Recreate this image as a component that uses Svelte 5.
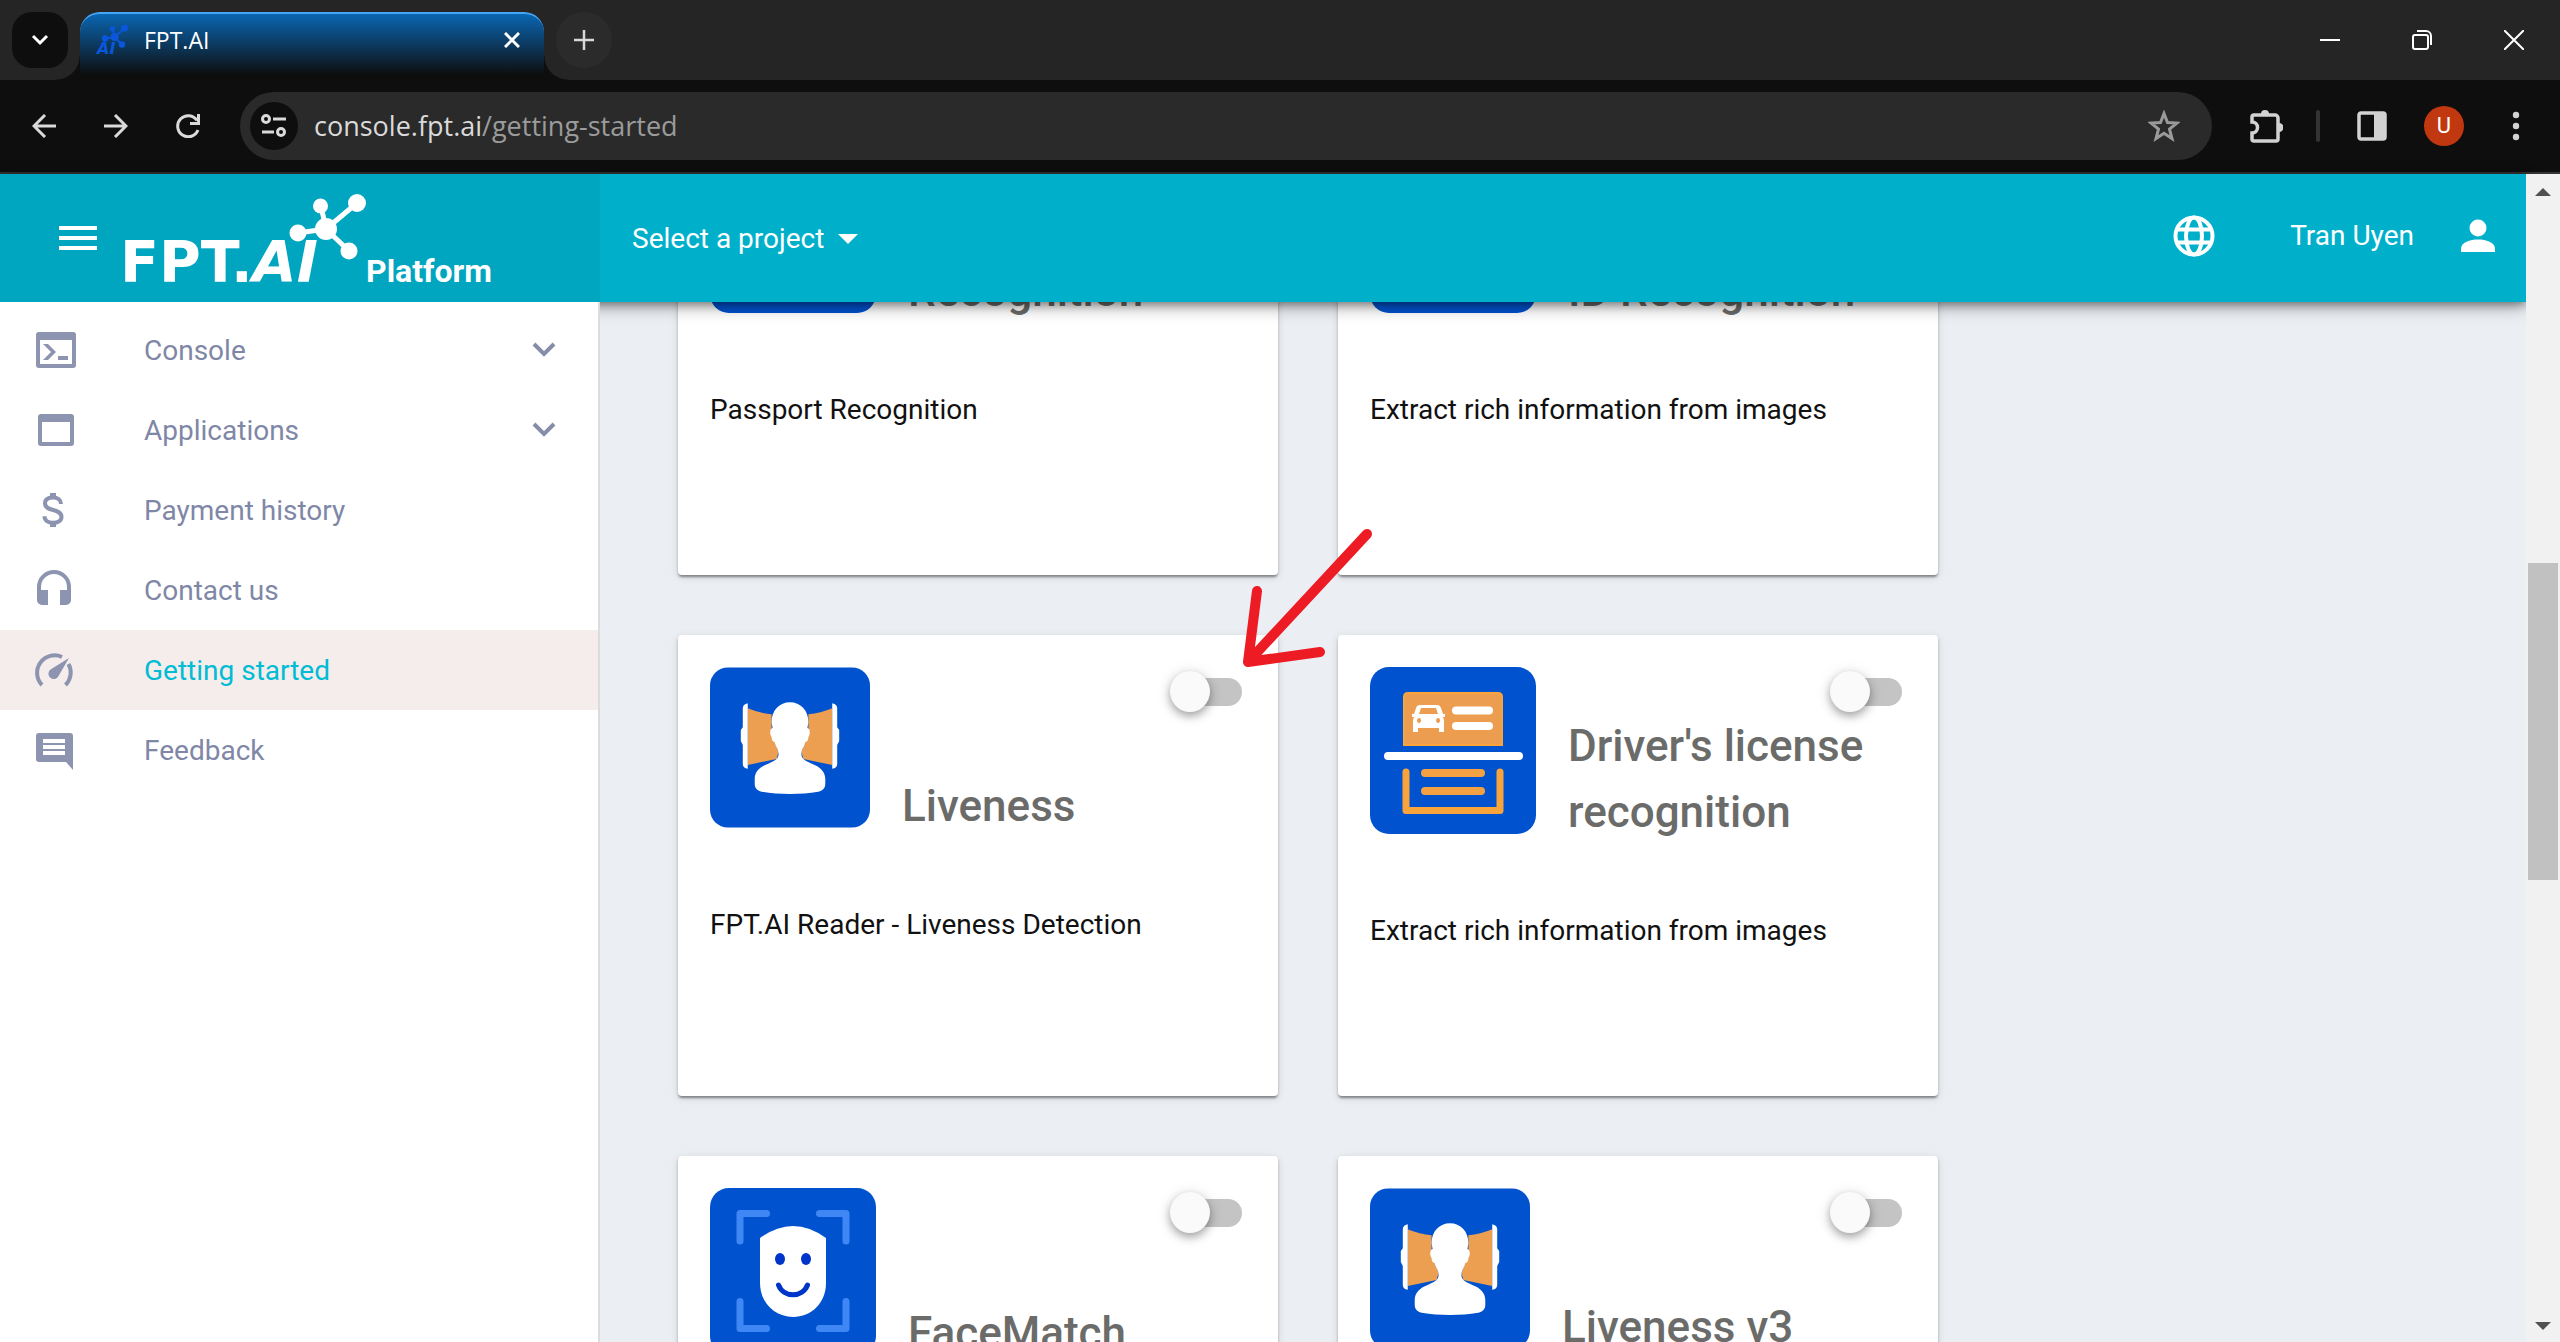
<script>
  const menu = [
    { label: 'Console', icon: 'console', expandable: true },
    { label: 'Applications', icon: 'window', expandable: true },
    { label: 'Payment history', icon: 'dollar' },
    { label: 'Contact us', icon: 'headset' },
    { label: 'Getting started', icon: 'gauge', active: true },
    { label: 'Feedback', icon: 'comment' }
  ];

  let cards = $state([
    { title: 'Passport Recognition', text: 'Passport Recognition', icon: 'plain', on: false },
    { title: 'ID Recognition', text: 'Extract rich information from images', icon: 'plain', on: false },
    { title: 'Liveness', text: 'FPT.AI Reader - Liveness Detection', icon: 'liveness', on: false },
    { title: "Driver's license recognition", text: 'Extract rich information from images', icon: 'license', on: false },
    { title: 'FaceMatch', text: '', icon: 'face', on: false },
    { title: 'Liveness v3', text: '', icon: 'liveness', on: false }
  ]);
</script>

{#snippet menuIcon(name)}
  <svg class="menu-icon" viewBox="0 0 48 48" aria-hidden="true">
    {#if name === 'console'}
      <path fill-rule="evenodd" d="M7 6h34a3 3 0 0 1 3 3v30a3 3 0 0 1-3 3H7a3 3 0 0 1-3-3V9a3 3 0 0 1 3-3zm1 8v24h32V14z" />
      <path d="M11 18h5l8 8-8 8h-5l8-8zM26 30h10v4H26z" />
    {:else if name === 'window'}
      <path fill-rule="evenodd" d="M9 8h30a3 3 0 0 1 3 3v26a3 3 0 0 1-3 3H9a3 3 0 0 1-3-3V11a3 3 0 0 1 3-3zm1 8v20h28V16z" />
    {:else if name === 'dollar'}
      <path class="line" d="M29 18c0-4-3-6.500-8-6.500s-8 2-8 5.800c0 9 16.500 4.500 16.500 13.500 0 4-3.500 6-8.500 6s-8.500-2.500-8.500-6.500" />
      <path d="M18 7h6v6h-6zM18 35h6v6h-6z" />
    {:else if name === 'headset'}
      <path class="line" d="M7 34V21a15 15 0 0 1 30 0v13" />
      <path d="M5 24h11v15h-6a5 5 0 0 1-5-5zM28 24h11v10a5 5 0 0 1-5 5h-6z" />
    {:else if name === 'gauge'}
      <path class="line" d="M10 39a17.500 17.500 0 0 1 20-28M36.500 18a17.500 17.500 0 0 1-3 21" />
      <path d="M37 12 26.500 30a5.300 5.300 0 1 1-8-6.500z" />
    {:else}
      <path fill-rule="evenodd" d="M7 7h31a3 3 0 0 1 3 3v34l-7-8H7a3 3 0 0 1-3-3V10a3 3 0 0 1 3-3zm4 6v4h22v-4zm0 6v4h22v-4zm0 6v4h22v-4z" />
    {/if}
  </svg>
{/snippet}

{#snippet tile(name)}
  {#if name === 'liveness'}
    <svg class="tile small" viewBox="0 0 161 161" aria-hidden="true">
      <rect width="161" height="161" rx="18" fill="#0052cf" />
      <path fill="#ec9f50" d="M38 41q12 5 24 6v20l7 18-2 7q-14 3-29 6zM123 41q-12 5-24 6v20l-7 18 2 7q14 3 29 6z" />
      <path fill="#fff" d="M38 36v66q-5-1-5-5V78l-2-4V63l2-3V41q0-4 5-5zM123 36v66q5-1 5-5V78l2-4V63l-2-3V41q0-4-5-5z" />
      <path fill="#fff" d="M80.500 35C70 35 62 43 62 55l1 6c-3 1-3 6-1 9 0 3 1 5 3 5 1 5 4 7 4 12 0 5-4 7-11 10-8 3-13 8-13 15v5c0 4 2 7 7 8 18 3 39 3 57 0 5-1 7-4 7-8v-5c0-7-5-12-13-15-7-3-11-5-11-10 0-5 3-7 4-12 2 0 3-2 3-5 2-3 2-8-1-9l1-6c0-12-8-20-18.500-20z" />
    </svg>
  {:else if name === 'license'}
    <svg class="tile" viewBox="0 0 166 167" aria-hidden="true">
      <rect width="166" height="167" rx="19" fill="#0052cf" />
      <path fill="#ec9d4f" stroke="#f9a43a" stroke-width="2" d="M34 78V30q0-4 4-4h90q4 0 4 4v48z" />
      <path fill="#fff" fill-rule="evenodd" d="M50 38h17q3 0 4 3l2 6h2v3h-2l1 3v12h-5v-4H48v4h-5V53l1-3h-2v-3h2l2-6q1-3 4-3zm1 3-2 6h19l-2-6zM49 51a2 2.500 0 1 0 .1 0zM68 51a2 2.500 0 1 0 .1 0z" />
      <path stroke="#fff" stroke-width="8" stroke-linecap="round" d="M86 43.500h33M86 59h33M18 89h131" />
      <path fill="none" stroke="#f9a43a" stroke-width="7" stroke-linecap="round" stroke-linejoin="round" d="M36 105v38.500h94V105" />
      <path stroke="#f4a143" stroke-width="8" stroke-linecap="round" d="M55 106h56M55 124h56" />
    </svg>
  {:else if name === 'face'}
    <svg class="tile" viewBox="0 0 166 167" aria-hidden="true">
      <rect width="166" height="167" rx="19" fill="#0052cf" />
      <path fill="none" stroke="#3f87f5" stroke-width="7" stroke-linecap="round" stroke-linejoin="round" d="M30 53V25.500h26.500M109.500 25.500H136V53M30 113.500v27h26.500M109.500 140.500H136v-27" />
      <path fill="#fff" d="M50 50q33-24 66 0v45c0 20-15 34-33 34S50 115 50 95z" />
      <ellipse cx="70" cy="71" rx="5" ry="6" fill="#0035c9" />
      <ellipse cx="96" cy="71" rx="5" ry="6" fill="#0035c9" />
      <path fill="none" stroke="#0035c9" stroke-width="5" stroke-linecap="round" d="M68.500 97c5 13 24 13 29 0" />
    </svg>
  {:else}
    <svg class="tile" viewBox="0 0 166 167" aria-hidden="true">
      <rect width="166" height="167" rx="19" fill="#0052cf" />
    </svg>
  {/if}
{/snippet}

<div class="window">
  <div class="titlebar">
    <button class="tab-search" aria-label="Search tabs">
      <svg width="18" height="12" viewBox="0 0 18 12"><path d="m2 2 7 7 7-7" fill="none" stroke="#fff" stroke-width="3" /></svg>
    </button>
    <div class="tab">
      <svg class="favicon" width="32" height="32" viewBox="0 0 32 32" aria-hidden="true">
        <g stroke="#0a56dc" stroke-width="2" fill="#0a56dc">
          <path d="m18.700 13 10-9M18.700 13l-2-8M18.700 13 9 14.500M18.700 13l7 7.500" />
          <circle cx="28.500" cy="4" r="2.500" /><circle cx="16.500" cy="5" r="1.800" /><circle cx="9" cy="14.500" r="2.200" />
          <circle cx="18.700" cy="13" r="3" /><circle cx="26" cy="20.500" r="2.200" />
        </g>
        <text x="1" y="30" class="favicon-text">AI</text>
      </svg>
      <span class="tab-title">FPT.AI</span>
      <button class="plain" aria-label="Close tab">
        <svg width="16" height="16" viewBox="0 0 16 16"><path d="m1 1 14 14M15 1 1 15" stroke="#fff" stroke-width="3" /></svg>
      </button>
    </div>
    <button class="new-tab" aria-label="New tab">
      <svg width="20" height="20" viewBox="0 0 20 20"><path d="M10 0v20M0 10h20" stroke="#d8d8d8" stroke-width="2.500" /></svg>
    </button>
    <div class="controls">
      <button class="plain" aria-label="Minimize"><svg width="20" height="20" viewBox="0 0 20 20"><path d="M0 10h20" stroke="#fff" stroke-width="2" /></svg></button>
      <button class="plain" aria-label="Restore">
        <svg width="20" height="20" viewBox="0 0 20 20" fill="none" stroke="#fff" stroke-width="2"><rect x="1" y="5" width="15" height="14" rx="2" /><path d="M5 1h9a5 5 0 0 1 5 5v9" /></svg>
      </button>
      <button class="plain" aria-label="Close window"><svg width="20" height="20" viewBox="0 0 20 20"><path d="m0 0 20 20M20 0 0 20" stroke="#fff" stroke-width="2" /></svg></button>
    </div>
  </div>

  <div class="toolbar">
    <div class="nav-buttons">
      <button class="plain" aria-label="Back"><svg width="24" height="24" viewBox="0 0 24 24" fill="none" stroke="#dadada" stroke-width="3"><path d="M24 12H2M13 1 2 12l11 11" /></svg></button>
      <button class="plain" aria-label="Forward"><svg width="24" height="24" viewBox="0 0 24 24" fill="none" stroke="#dadada" stroke-width="3"><path d="M0 12h22M11 1l11 11-11 11" /></svg></button>
      <button class="plain" aria-label="Reload"><svg width="24" height="24" viewBox="0 0 24 24" fill="none" stroke="#dadada" stroke-width="3"><path d="M22 16A10.500 10.500 0 1 1 21 6.500M22.500 0v9.500H14" /></svg></button>
    </div>
    <div class="omnibox">
      <button class="site-info" aria-label="View site information">
        <svg width="26" height="24" viewBox="0 0 26 24" fill="none" stroke="#dadada" stroke-width="3"><circle cx="5" cy="5" r="3.500" /><path d="M12 5h13M1 18h12" /><circle cx="20" cy="18" r="3.500" /></svg>
      </button>
      <div class="url" role="textbox" tabindex="0" aria-label="Address">console.fpt.ai<span>/getting-started</span></div>
      <button class="plain" aria-label="Bookmark this page">
        <svg width="32" height="32" viewBox="0 0 32 32"><path d="m16 3.500 3.500 9 9.500.6-7.500 6 2.500 9.400-8-5.300-8 5.300 2.500-9.400-7.500-6 9.500-.6z" fill="none" stroke="#9a9a9a" stroke-width="3" /></svg>
      </button>
    </div>
    <div class="tools">
      <button class="plain" aria-label="Extensions">
        <svg width="34" height="34" viewBox="0 0 34 34"><path d="M5 6h21a3 3 0 0 1 3 3v21a2 2 0 0 1-2 2H5a2 2 0 0 1-2-2v-6a5.500 5.500 0 0 0 0-11V8a2 2 0 0 1 2-2z" fill="none" stroke="#d2d2d2" stroke-width="3.500" /><path d="M12 5a4 4 0 0 1 8 0zM30 14a4.500 4.500 0 0 1 0 9z" fill="#d2d2d2" /></svg>
      </button>
      <span class="divider"></span>
      <button class="plain" aria-label="Side panel">
        <svg width="30" height="30" viewBox="0 0 30 30"><rect x="2" y="2" width="26" height="26" rx="2" fill="none" stroke="#d2d2d2" stroke-width="3.500" /><path d="M17 2h11v26H17z" fill="#d2d2d2" /></svg>
      </button>
      <button class="avatar" aria-label="Profile">U</button>
      <button class="plain" aria-label="Browser menu">
        <svg width="8" height="30" viewBox="0 0 8 30" fill="#d2d2d2"><circle cx="4" cy="4" r="3.200" /><circle cx="4" cy="15" r="3.200" /><circle cx="4" cy="26" r="3.200" /></svg>
      </button>
    </div>
  </div>

  <div class="viewport">
    <div class="app">
      <header>
        <div class="brand">
          <button class="plain" aria-label="Toggle menu">
            <svg width="38" height="24" viewBox="0 0 38 24"><path d="M0 2h38M0 12h38M0 22h38" stroke="#fff" stroke-width="4" /></svg>
          </button>
          <a class="logo" href="#home" aria-label="FPT.AI Platform">
            <svg width="242" height="90" viewBox="0 0 242 90">
              <g stroke="#fff" fill="#fff">
                <path stroke-width="5" d="m202 35 31-26M202 35l-5-23M202 35l-28 4M202 35l23 22" />
                <g stroke="none"><circle cx="202" cy="35" r="11" /><circle cx="174" cy="39" r="8.500" /><circle cx="196.500" cy="12" r="7.500" /><circle cx="233" cy="9" r="9" /><circle cx="225" cy="57" r="8.500" /></g>
              </g>
              <text class="wordmark" x="-4" y="88">FPT.<tspan class="slanted">AI</tspan></text>
            </svg>
            <span>Platform</span>
          </a>
        </div>
        <button class="project">Select a project <svg width="20" height="10" viewBox="0 0 20 10"><path d="M0 0h20L10 10z" fill="#fff" /></svg></button>
        <div class="account">
          <button class="plain" aria-label="Language">
            <svg width="42" height="42" viewBox="0 0 42 42" fill="none" stroke="#fff" stroke-width="4"><circle cx="21" cy="21" r="18.500" /><ellipse cx="21" cy="21" rx="8" ry="18.500" /><path d="M3 14.500h36M3 27.500h36" /></svg>
          </button>
          <span class="user">Tran Uyen</span>
          <button class="plain" aria-label="Account">
            <svg width="34" height="34" viewBox="0 0 34 34" fill="#fff"><circle cx="17" cy="9" r="8.500" /><path d="M0 33v-3c0-7 9-9.500 17-9.500S34 23 34 30v3z" /></svg>
          </button>
        </div>
      </header>

      <div class="body">
        <nav>
          {#each menu as item}
            <a href="#{item.icon}" class:active={item.active}>
              {@render menuIcon(item.icon)}
              <span>{item.label}</span>
              {#if item.expandable}
                <svg class="chevron" width="24" height="16" viewBox="0 0 24 16"><path d="m2 2 10 10L22 2" fill="none" stroke="#858dab" stroke-width="4" /></svg>
              {/if}
            </a>
          {/each}
        </nav>
        <main>
          <div class="cards">
            {#each cards as card}
              <article>
                <div class="head">
                  {@render tile(card.icon)}
                  <h2>{card.title}</h2>
                </div>
                <input type="checkbox" role="switch" aria-label={card.title} bind:checked={card.on} />
                {#if card.text}<p>{card.text}</p>{/if}
              </article>
            {/each}
          </div>
          <svg class="pointer" width="136" height="144" viewBox="0 0 136 144" aria-hidden="true">
            <path d="M127 7 8 135 17 64M8 135l72-10" fill="none" stroke="#ed1c24" stroke-width="10" stroke-linecap="round" stroke-linejoin="round" />
          </svg>
        </main>
      </div>
    </div>
    <div class="scrollbar">
      <svg width="16" height="8" viewBox="0 0 16 8"><path d="m8 0 8 8H0z" fill="#505050" /></svg>
      <div class="scroll-track"><div class="scroll-thumb"></div></div>
      <svg width="16" height="8" viewBox="0 0 16 8"><path d="M0 0h16L8 8z" fill="#505050" /></svg>
    </div>
  </div>
</div>

<style>
  :global(body) { margin: 0; }
  * { box-sizing: border-box; }
  svg { display: block; flex: none; }
  button { border: 0; padding: 0; background: none; color: inherit; font: inherit; cursor: pointer; }
  a { color: inherit; text-decoration: none; }

  .window { display: flex; flex-direction: column; height: 100vh; overflow: hidden; font: 28px/40px Roboto, sans-serif; }

  .titlebar { display: flex; flex: none; height: 80px; padding: 12px 36px 0 12px; background: #252525; color: #fff; font: 23px/32px "Open Sans", sans-serif; }
  .tab-search, .new-tab { display: grid; place-items: center; width: 56px; height: 56px; }
  .tab-search { border-radius: 20px; background: #0e0e0e; }
  .new-tab { margin-left: 12px; border-radius: 50%; background: #2b2b2b; }
  .tab { position: relative; display: flex; align-items: center; gap: 16px; width: 464px; margin-left: 12px; padding: 0 24px 14px 16px; border-top: 2px solid #45a6f7; border-radius: 20px 20px 0 0; background: linear-gradient(#0a66b2, #0e0e0e 92%); }
  .tab::before, .tab::after { content: ""; position: absolute; bottom: 0; width: 24px; height: 24px; }
  .tab::before { right: 100%; background: radial-gradient(circle at 0 0, transparent 23px, #0e0e0e 24px); }
  .tab::after { left: 100%; background: radial-gradient(circle at 100% 0, transparent 23px, #0e0e0e 24px); }
  .tab-title { flex: 1; }
  .favicon-text { fill: #0a56dc; font: italic bold 16px "DejaVu Sans", sans-serif; }
  .controls { display: flex; gap: 72px; height: 56px; margin-left: auto; }

  .toolbar { display: flex; flex: none; align-items: center; height: 94px; padding: 0 40px 0 32px; border-bottom: 2px solid #363434; background: #0e0e0e; color: #dadada; }
  .nav-buttons { display: flex; gap: 48px; margin-right: 40px; }
  .omnibox { display: flex; flex: 1; align-items: center; height: 68px; padding: 0 32px 0 10px; border-radius: 34px; background: #2a2a2a; font: 27px/40px "Open Sans", sans-serif; }
  .site-info { display: grid; place-items: center; width: 48px; height: 48px; margin-right: 16px; border-radius: 50%; background: #0e0e0e; }
  .url { flex: 1; }
  .url span { color: #9b9b9b; }
  .tools { display: flex; align-items: center; margin-left: 37px; gap: 37px; }
  .divider { width: 4px; height: 32px; margin-left: -4px; border-radius: 2px; background: #333; }
  .avatar { width: 40px; height: 40px; border-radius: 50%; background: #c1370f; color: #fff; font: 22px/40px Roboto, sans-serif; }
  .tools .avatar + .plain { margin-left: 11px; }

  .viewport { display: flex; flex: 1; min-height: 0; }
  .app { display: flex; flex: 1; flex-direction: column; min-width: 0; }
  header { position: relative; z-index: 1; display: flex; flex: none; height: 128px; background: #00b0cb; color: #fff; box-shadow: 0 4px 16px rgba(0, 0, 0, .4), 0 2px 8px rgba(0, 0, 0, .3); }
  .brand { display: flex; align-items: center; width: 600px; padding-left: 59px; background: #00a5c0; }
  .logo { display: flex; align-items: flex-end; align-self: flex-end; height: 108px; margin-left: 27px; padding-bottom: 18px; }
  .logo svg { overflow: visible; }
  .logo span { font: bold 32px/32px Roboto, sans-serif; margin-bottom: -3px; }
  .wordmark { fill: #fff; font: bold 57px "DejaVu Sans", sans-serif; }
  .slanted { font-style: italic; }
  .project { display: flex; align-items: center; gap: 14px; padding: 2px 0 0 32px; }
  .account { display: flex; align-items: center; margin-left: auto; padding: 0 31px 4px 0; }
  .user { margin: 0 47px 0 75px; }

  .body { display: flex; flex: 1; min-height: 0; }
  nav { position: relative; z-index: 2; width: 600px; padding-top: 8px; border-right: 2px solid #dcdcde; background: #fff; color: #7f87a7; }
  nav a { display: flex; align-items: center; height: 80px; padding: 0 42px 0 32px; }
  nav a span { flex: 1; margin-left: 64px; padding-top: 2px; }
  nav a.active { background: #f5edec; }
  nav a.active span { color: #00bcd4; }
  .menu-icon { width: 48px; height: 48px; fill: #8c94b0; }
  .menu-icon .line { fill: none; stroke: #8c94b0; stroke-width: 4; }

  main { position: relative; flex: 1; overflow: hidden; background: #ebeff4; }
  .cards { display: grid; grid-template-columns: repeat(2, 600px); gap: 60px; margin: -188px 78px 0; }
  article { position: relative; min-height: 461px; padding: 32px; border-radius: 4px; background: #fff; box-shadow: 0 3px 2px -1px rgba(0, 0, 0, .25), 0 2px 3px rgba(0, 0, 0, .2), 0 2px 8px rgba(0, 0, 0, .12); }
  .head { display: flex; align-items: flex-end; gap: 32px; }
  .tile { width: 166px; height: 167px; margin-bottom: 11px; }
  .tile.small { width: 160px; height: 161px; }
  h2 { margin: 0; color: #6b6c6a; font: 500 44px/66px Roboto, sans-serif; }
  p { margin: 66px 0 0; color: #111; }

  input { appearance: none; position: absolute; top: 43px; right: 36px; width: 68px; height: 28px; margin: 0; border-radius: 14px; background: #c4c4c4; cursor: pointer; }
  input::before { content: ""; position: absolute; top: -7px; left: -4px; width: 40px; height: 41px; border-radius: 50%; background: #fafafa; box-shadow: 0 4px 8px rgba(0, 0, 0, .3), 0 2px 16px rgba(0, 0, 0, .12); }
  input:checked { background: #80d8e5; }
  input:checked::before { left: 32px; background: #00b0cb; }

  .pointer { position: absolute; top: 225px; left: 640px; }

  .scrollbar { position: relative; z-index: 2; display: flex; flex-direction: column; align-items: center; width: 34px; padding: 14px 2px 12px; background: #f1f1f1; }
  .scroll-track { flex: 1; width: 100%; padding: 367px 0 0; }
  .scroll-thumb { height: 317px; background: #c1c1c1; }
</style>
